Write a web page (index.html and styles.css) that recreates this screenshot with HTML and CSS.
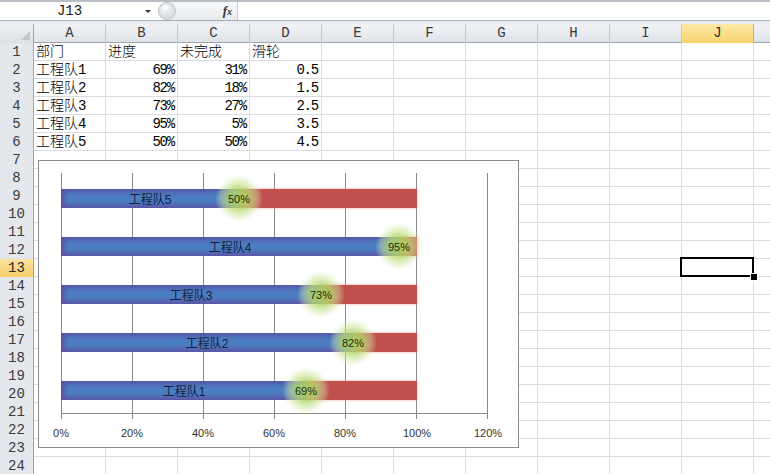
FILE: index.html
```html
<!DOCTYPE html>
<html lang="zh">
<head>
<meta charset="utf-8">
<title>Excel 进度图</title>
<link rel="stylesheet" href="styles.css">
</head>
<body>
<div class="app">
  <div class="fbar">
    <div class="namebox"><span class="ref">J13</span><span class="dd"></span></div>
    <div class="fxzone"><span class="knob"></span><span class="fx"><i>f</i><span class="fxx">x</span></span></div>
    <div class="finput"></div>
  </div>
  <div class="gap"></div>
  <div class="sheet">
    <div class="row hdr">
      <div class="corner"></div>
      <div class="ch">A</div><div class="ch">B</div><div class="ch">C</div><div class="ch">D</div><div class="ch">E</div>
      <div class="ch">F</div><div class="ch">G</div><div class="ch">H</div><div class="ch">I</div><div class="ch on">J</div><div class="ch last"></div>
    </div>
    <div class="row"><div class="rh">1</div><div class="c cj">部门</div><div class="c cj">进度</div><div class="c cj">未完成</div><div class="c cj">滑轮</div></div>
    <div class="row"><div class="rh">2</div><div class="c cj">工程队1</div><div class="c n">69%</div><div class="c n">31%</div><div class="c n">0.5</div></div>
    <div class="row"><div class="rh">3</div><div class="c cj">工程队2</div><div class="c n">82%</div><div class="c n">18%</div><div class="c n">1.5</div></div>
    <div class="row"><div class="rh">4</div><div class="c cj">工程队3</div><div class="c n">73%</div><div class="c n">27%</div><div class="c n">2.5</div></div>
    <div class="row"><div class="rh">5</div><div class="c cj">工程队4</div><div class="c n">95%</div><div class="c n">5%</div><div class="c n">3.5</div></div>
    <div class="row"><div class="rh">6</div><div class="c cj">工程队5</div><div class="c n">50%</div><div class="c n">50%</div><div class="c n">4.5</div></div>
    <div class="row"><div class="rh">7</div></div>
    <div class="row"><div class="rh">8</div></div>
    <div class="row"><div class="rh">9</div></div>
    <div class="row"><div class="rh">10</div></div>
    <div class="row"><div class="rh">11</div></div>
    <div class="row"><div class="rh">12</div></div>
    <div class="row"><div class="rh on">13</div></div>
    <div class="row"><div class="rh">14</div></div>
    <div class="row"><div class="rh">15</div></div>
    <div class="row"><div class="rh">16</div></div>
    <div class="row"><div class="rh">17</div></div>
    <div class="row"><div class="rh">18</div></div>
    <div class="row"><div class="rh">19</div></div>
    <div class="row"><div class="rh">20</div></div>
    <div class="row"><div class="rh">21</div></div>
    <div class="row"><div class="rh">22</div></div>
    <div class="row"><div class="rh">23</div></div>
    <div class="row"><div class="rh">24</div></div>
  </div>

  <svg class="chart" viewBox="38 160 481 288" width="481" height="288" xmlns="http://www.w3.org/2000/svg">
    <defs>
      <linearGradient id="blue" x1="0" y1="0" x2="0" y2="1">
        <stop offset="0" stop-color="#5a55a7"/>
        <stop offset="0.28" stop-color="#4c76bc"/>
        <stop offset="0.5" stop-color="#4a7fc2"/>
        <stop offset="0.72" stop-color="#4c76bc"/>
        <stop offset="1" stop-color="#5a55a7"/>
      </linearGradient>
      <linearGradient id="bleft" x1="0" y1="0" x2="1" y2="0">
        <stop offset="0" stop-color="#5a4fa6" stop-opacity="0.95"/>
        <stop offset="1" stop-color="#5a4fa6" stop-opacity="0"/>
      </linearGradient>
      <radialGradient id="glow">
        <stop offset="0" stop-color="#a9cf5c" stop-opacity="0.95"/>
        <stop offset="0.45" stop-color="#b6d86f" stop-opacity="0.8"/>
        <stop offset="0.75" stop-color="#cfe6a0" stop-opacity="0.45"/>
        <stop offset="1" stop-color="#e2f0c8" stop-opacity="0"/>
      </radialGradient>
      <filter id="blur" x="-20%" y="-50%" width="140%" height="200%"><feGaussianBlur stdDeviation="1.6"/></filter>
    </defs>

    <rect x="38.5" y="160.5" width="480" height="287" fill="#fff" stroke="#8c8c8c"/>

    <g stroke="#8a8a8a" stroke-width="1">
      <line x1="61.5" y1="173" x2="61.5" y2="419"/>
      <line x1="132.5" y1="173" x2="132.5" y2="419"/>
      <line x1="203.5" y1="173" x2="203.5" y2="419"/>
      <line x1="274.5" y1="173" x2="274.5" y2="419"/>
      <line x1="345.5" y1="173" x2="345.5" y2="419"/>
      <line x1="416.5" y1="173" x2="416.5" y2="419"/>
      <line x1="487.5" y1="173" x2="487.5" y2="419"/>
      <line x1="61" y1="413.5" x2="488" y2="413.5"/>
    </g>

    <g class="axis">
      <text x="61" y="437">0%</text>
      <text x="132" y="437">20%</text>
      <text x="203" y="437">40%</text>
      <text x="274" y="437">60%</text>
      <text x="345" y="437">80%</text>
      <text x="417" y="437">100%</text>
      <text x="488" y="437">120%</text>
    </g>

    <!-- 工程队5 50% -->
    <g>
      <rect x="239" y="189" width="178" height="19" fill="#ef8a88" opacity="0.8" filter="url(#blur)"/>
      <rect x="239" y="189" width="178" height="19" fill="#c0504d"/>
      <rect x="61" y="189" width="178" height="19" fill="url(#blue)"/>
      <rect x="61" y="189" width="7" height="19" fill="url(#bleft)"/>
      <circle cx="239" cy="198.5" r="24" fill="url(#glow)"/>
      <text class="team" x="150" y="203.5">工程队5</text>
      <text class="pct" x="239" y="203">50%</text>
    </g>
    <!-- 工程队4 95% -->
    <g>
      <rect x="399" y="237" width="18" height="19" fill="#ef8a88" opacity="0.8" filter="url(#blur)"/>
      <rect x="399" y="237" width="18" height="19" fill="#c0504d"/>
      <rect x="61" y="237" width="338" height="19" fill="url(#blue)"/>
      <rect x="61" y="237" width="7" height="19" fill="url(#bleft)"/>
      <circle cx="399" cy="246.5" r="24" fill="url(#glow)"/>
      <text class="team" x="230" y="251.5">工程队4</text>
      <text class="pct" x="399" y="251">95%</text>
    </g>
    <!-- 工程队3 73% -->
    <g>
      <rect x="321" y="285" width="96" height="19" fill="#ef8a88" opacity="0.8" filter="url(#blur)"/>
      <rect x="321" y="285" width="96" height="19" fill="#c0504d"/>
      <rect x="61" y="285" width="260" height="19" fill="url(#blue)"/>
      <rect x="61" y="285" width="7" height="19" fill="url(#bleft)"/>
      <circle cx="321" cy="294.5" r="24" fill="url(#glow)"/>
      <text class="team" x="191" y="299.5">工程队3</text>
      <text class="pct" x="321" y="299">73%</text>
    </g>
    <!-- 工程队2 82% -->
    <g>
      <rect x="353" y="333" width="64" height="19" fill="#ef8a88" opacity="0.8" filter="url(#blur)"/>
      <rect x="353" y="333" width="64" height="19" fill="#c0504d"/>
      <rect x="61" y="333" width="292" height="19" fill="url(#blue)"/>
      <rect x="61" y="333" width="7" height="19" fill="url(#bleft)"/>
      <circle cx="353" cy="342.5" r="24" fill="url(#glow)"/>
      <text class="team" x="207" y="347.5">工程队2</text>
      <text class="pct" x="353" y="347">82%</text>
    </g>
    <!-- 工程队1 69% -->
    <g>
      <rect x="306" y="381" width="111" height="19" fill="#ef8a88" opacity="0.8" filter="url(#blur)"/>
      <rect x="306" y="381" width="111" height="19" fill="#c0504d"/>
      <rect x="61" y="381" width="245" height="19" fill="url(#blue)"/>
      <rect x="61" y="381" width="7" height="19" fill="url(#bleft)"/>
      <circle cx="306" cy="390.5" r="24" fill="url(#glow)"/>
      <text class="team" x="184" y="395.5">工程队1</text>
      <text class="pct" x="306" y="395">69%</text>
    </g>
  </svg>

  <div class="sel"><span class="handle"></span></div>
</div>
</body>
</html>
```

FILE: styles.css
```css
* { box-sizing: border-box; }

html, body {
  margin: 0;
  padding: 0;
  background: #ffffff;
  overflow: hidden;
}

.app {
  position: relative;
  width: 770px;
  height: 474px;
  overflow: hidden;
  font-family: "Liberation Mono", "Noto Sans CJK SC", monospace;
  color: #000;
}

/* ---------- formula bar ---------- */
.fbar {
  display: flex;
  height: 20px;
  border-top: 2px solid #b9bec5;
  background: #ffffff;
}

.namebox {
  display: flex;
  align-items: center;
  width: 158px;
  padding-right: 4px;
  background: #fff;
}

.ref {
  flex: 1;
  text-align: center;
  font-size: 14px;
  line-height: 18px;
  padding-left: 0;
  padding-right: 6px;
  color: #1a1a1a;
}

.dd {
  width: 0;
  height: 0;
  border-left: 3px solid transparent;
  border-right: 3px solid transparent;
  border-top: 3px solid #333;
  margin-right: 3px;
}

.fxzone {
  display: flex;
  align-items: center;
  justify-content: space-between;
  width: 79px;
  padding-right: 5px;
  background: linear-gradient(#f7f8fa, #e9ecef);
  border-radius: 9px 0 0 9px;
}

.knob {
  width: 18px;
  height: 18px;
  border-radius: 50%;
  background: radial-gradient(circle at 40% 30%, #ffffff 0 2px, #eef0f3 3px, #dadee3 9px);
  border: 1px solid #b9bfc7;
}

.fx {
  font-family: "Liberation Serif", serif;
  font-weight: bold;
  font-size: 13px;
  color: #333;
  line-height: 18px;
}

.fx i { font-style: italic; }

.fxx {
  font-style: italic;
  font-size: 10px;
}

.finput {
  flex: 1;
  border-left: 1px solid #c9ced4;
  background: #fff;
}

.gap {
  height: 4px;
  border-top: 1px solid #a8aeb6;
  background: #e9ecf0;
}

/* ---------- sheet ---------- */
.sheet {
  display: flex;
  flex-direction: column;
}

.row {
  display: grid;
  grid-template-columns: 34px repeat(10, 72px) 1fr;
  height: 18px;
  border-bottom: 1px solid #dadcdf;
  background-image: linear-gradient(to right, transparent 71px, #dadcdf 71px);
  background-size: 72px 100%;
  background-position: 34px 0;
}

.rh {
  grid-column: 1;
  background: #e4e8ed;
  border-right: 1px solid #9da6b0;
  border-bottom: 1px solid #c7ccd3;
  margin-bottom: -1px;
  text-align: center;
  font-size: 14px;
  line-height: 18px;
  color: #3a3a3a;
}

.rh.on {
  background: linear-gradient(#fbe3a2, #f6cd65);
  color: #2a2a2a;
  border-bottom-color: #d7ad4c;
}

.row.hdr {
  height: 19px;
  border-bottom: 1px solid #9da6b0;
  background: linear-gradient(#f1f3f6, #dfe3e8);
}

.corner {
  position: relative;
  background: linear-gradient(#eef1f4, #dde1e6);
  border-right: 1px solid #9da6b0;
}

.corner::after {
  content: "";
  position: absolute;
  right: 3px;
  bottom: 3px;
  width: 0;
  height: 0;
  border-left: 9px solid transparent;
  border-bottom: 9px solid #c3c8ce;
}

.ch {
  border-right: 1px solid #c2c8cf;
  text-align: center;
  font-size: 14px;
  line-height: 19px;
  color: #3a3a3a;
}

.ch.on {
  background: linear-gradient(#fde9a6, #f8d36c);
  border-right-color: #d8b04f;
  color: #2a2a2a;
}

.ch.last { border-right: 0; }

.c {
  font-size: 14px;
  line-height: 18px;
  white-space: nowrap;
  overflow: visible;
}

.c.cj {
  padding-left: 2px;
  font-weight: 300;
}

.c.n {
  text-align: right;
  padding-right: 4px;
  letter-spacing: -1.2px;
}

/* ---------- chart ---------- */
.chart {
  position: absolute;
  left: 38px;
  top: 160px;
  display: block;
}

.axis text {
  font-family: "Liberation Sans", Arial, sans-serif;
  font-size: 11px;
  fill: #333333;
  text-anchor: middle;
}

.team {
  font-family: "Liberation Sans", "Noto Sans CJK SC", sans-serif;
  font-size: 12px;
  fill: #16223f;
  text-anchor: middle;
}

.pct {
  font-family: "Liberation Sans", Arial, sans-serif;
  font-size: 11px;
  fill: #1d2a14;
  text-anchor: middle;
}

/* ---------- selection ---------- */
.sel {
  position: absolute;
  left: 680px;
  top: 257px;
  width: 74px;
  height: 20px;
  border: 2px solid #000;
}

.handle {
  position: absolute;
  right: -5px;
  bottom: -5px;
  width: 6px;
  height: 6px;
  background: #000;
  outline: 1px solid #fff;
}
```
